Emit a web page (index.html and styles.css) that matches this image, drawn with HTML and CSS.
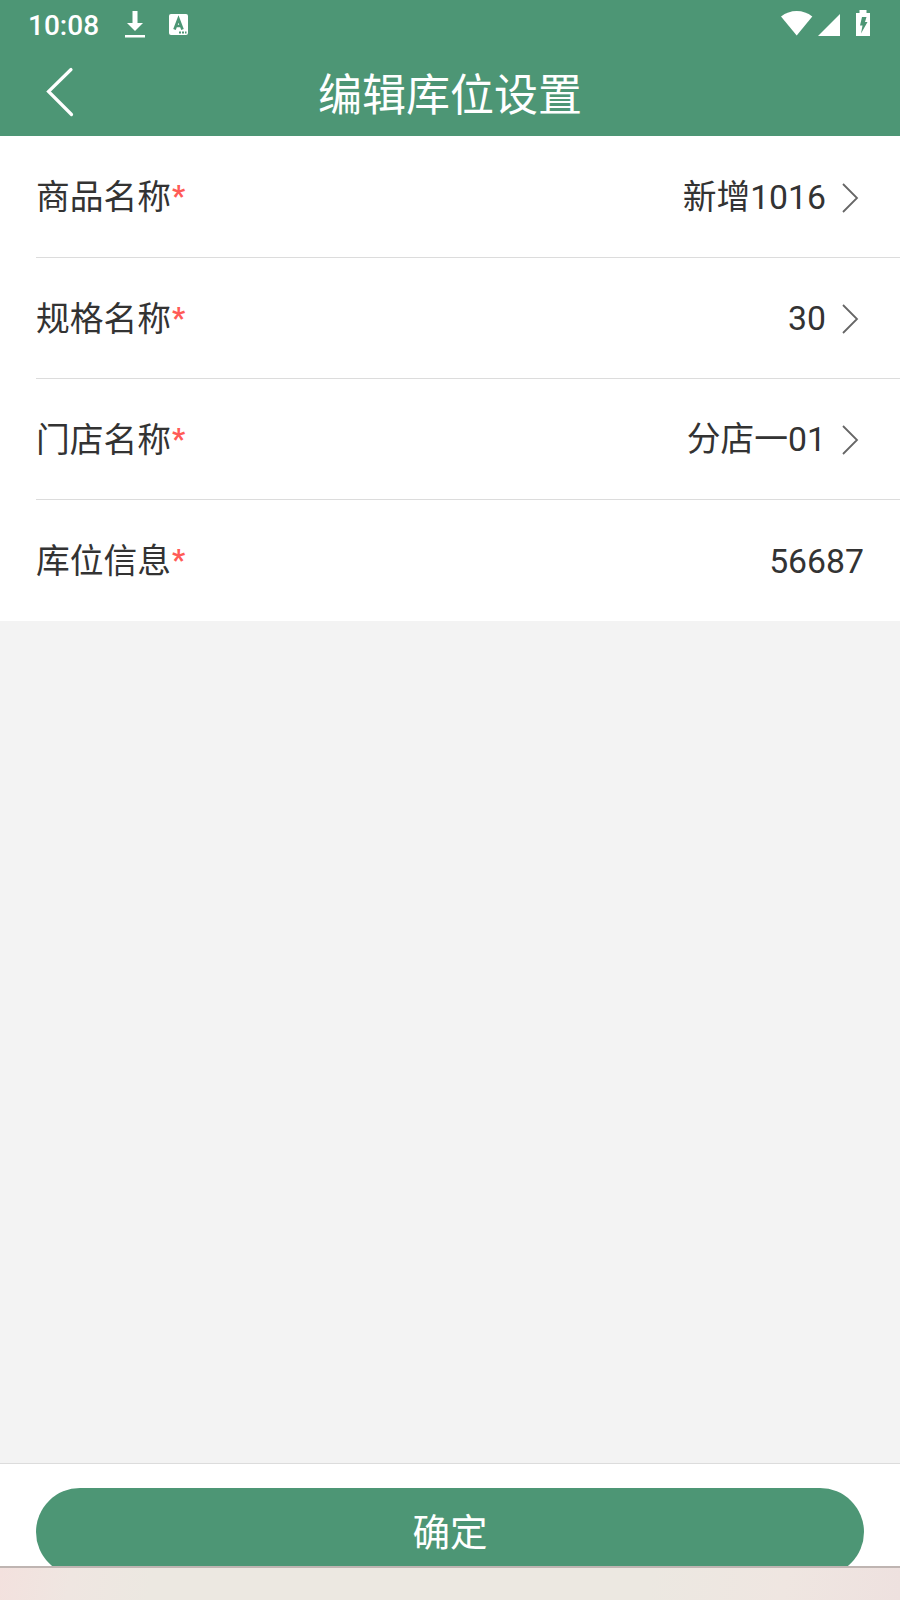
FILE: index.html
```html
<!DOCTYPE html>
<html lang="zh-CN">
<head>
  <meta charset="UTF-8" />
  <title>编辑库位设置</title>
  <link rel="stylesheet" href="styles.css">
</head>
<body>
  <div class="screen">
    <div class="status-bar">
      <span class="time">10:08</span>
      <svg class="download" width="20" height="27" viewBox="0 0 20 27">
        <path d="M7.5 0h5v12H18l-8 8-8-8h5.500zM0 24h20v2.500H0z" fill="#fff"/>
      </svg>
      <svg class="keyboard" width="19" height="21" viewBox="0 0 19 21">
        <rect width="19" height="21" rx="2" fill="#fff"/>
        <path d="M5.500 15.500L9.500 5L13.500 15.500M7 12h5" fill="none" stroke="#4d9675" stroke-width="2.700"/>
        <path d="M10 17.500h2v2h-2zM13 17.500h2v2h-2zM16 17.500h1.500v2H16z" fill="#4d9675"/>
      </svg>
      <div class="system">
        <svg width="32" height="25" viewBox="0 0 32 25">
          <path d="M0 5.500Q7 0 15.700 0T31.300 5.500L15.700 24.500z" fill="#fff"/>
        </svg>
        <svg class="signal" width="22" height="22" viewBox="0 0 22 22">
          <path d="M22 0v22H0z" fill="#fff"/>
        </svg>
        <svg class="battery" width="14" height="26" viewBox="0 0 14 26">
          <path d="M3.500 0h7v3H14v23H0V3h3.500z" fill="#fff"/>
          <path d="M6 7h4.500l-1.500 5h2.500L5 23.500l1.500-8H4z" fill="#4d9675"/>
        </svg>
      </div>
    </div>

    <div class="nav-bar">
      <svg class="back" width="28" height="50" viewBox="0 0 28 50">
        <path d="M25 2.500L2.500 24.500L25.500 47.500" fill="none" stroke="#fff" stroke-width="3.200" stroke-linecap="round"/>
      </svg>
      <h1>编辑库位设置</h1>
    </div>

    <div class="form">
      <div class="row">
        <span class="label">商品名称<span class="required">*</span></span>
        <span class="value">新增1016</span>
        <svg class="arrow" width="17" height="30" viewBox="0 0 17 30"><path d="M1 1L15 15L1 29"/></svg>
      </div>
      <div class="row">
        <span class="label">规格名称<span class="required">*</span></span>
        <span class="value">30</span>
        <svg class="arrow" width="17" height="30" viewBox="0 0 17 30"><path d="M1 1L15 15L1 29"/></svg>
      </div>
      <div class="row">
        <span class="label">门店名称<span class="required">*</span></span>
        <span class="value">分店一01</span>
        <svg class="arrow" width="17" height="30" viewBox="0 0 17 30"><path d="M1 1L15 15L1 29"/></svg>
      </div>
      <div class="row">
        <span class="label">库位信息<span class="required">*</span></span>
        <span class="value">56687</span>
      </div>
    </div>

    <div class="footer">
      <button class="confirm">确定</button>
    </div>
    <div class="bottom-strip"></div>
  </div>
</body>
</html>
```

FILE: styles.css
```css
body {
  margin: 0;
  font-family: Roboto, "Noto Sans CJK SC", sans-serif;
  color: #333;
}

.screen {
  display: flex;
  flex-direction: column;
  width: 900px;
  height: 1600px;
  overflow: hidden;
  background: #f3f3f3;
}

.status-bar {
  display: flex;
  align-items: flex-start;
  flex: none;
  box-sizing: border-box;
  height: 48px;
  padding: 10px 30px 0 28px;
  background: #4d9675;
  color: #fff;
}

.time {
  width: 97px;
  font-size: 28px;
  font-weight: 500;
  line-height: 31px;
}

.download {
  margin-top: 1px;
}

.keyboard {
  margin: 4px 0 0 24px;
}

.system {
  display: flex;
  margin-left: auto;
  padding-top: 1px;
}

.signal {
  margin: 3px 0 0 5px;
}

.battery {
  margin: -1px 0 0 16px;
}

.nav-bar {
  display: grid;
  grid-template-columns: 80px 1fr 80px;
  align-items: center;
  flex: none;
  height: 88px;
  background: #4d9675;
  color: #fff;
}

.back {
  margin: 0 0 0 46px;
}

h1 {
  margin: 0;
  padding-top: 8px;
  font-size: 44px;
  font-weight: 400;
  line-height: 80px;
  text-align: center;
}

.form {
  flex: none;
  padding-left: 36px;
  background: #fff;
}

.row {
  display: flex;
  align-items: center;
  box-sizing: border-box;
  height: 121px;
  padding-right: 41px;
  border-bottom: 1px solid #dcdcdc;
  font-size: 33.75px;
}

.row:first-child {
  height: 122px;
}

.row:last-child {
  padding-right: 36px;
  border-bottom: none;
}

.label {
  padding-bottom: 4px;
}

.required {
  margin-left: 1px;
  font-size: 29px;
  font-weight: 700;
  line-height: 1;
  vertical-align: 3px;
  color: #ff5b57;
}

/* same line box for values with and without Chinese text */
.value {
  margin-left: auto;
  padding-top: 2px;
  line-height: 40px;
}

.arrow {
  margin: 2px 0 0 16px;
  fill: none;
  stroke: #666;
  stroke-width: 1.8;
}

.footer {
  flex: none;
  box-sizing: border-box;
  height: 103px;
  margin-top: auto;
  padding: 24px 36px 0;
  overflow: hidden;
  border-top: 1px solid #dcdcdc;
  background: #fff;
}

.confirm {
  display: block;
  width: 100%;
  height: 88px;
  padding: 0 0 6px;
  border: none;
  border-radius: 44px;
  background: #4d9675;
  color: #fff;
  font-family: inherit;
  font-size: 37.5px;
}

.bottom-strip {
  flex: none;
  box-sizing: border-box;
  height: 34px;
  border-top: 2px solid #bfb5b2;
  background: linear-gradient(100deg, #f3e1de, #efe6e1 8%, #ece8e1 17%, #ece8e1 72%, #efe6e1 87%, #eee1df);
}
```
